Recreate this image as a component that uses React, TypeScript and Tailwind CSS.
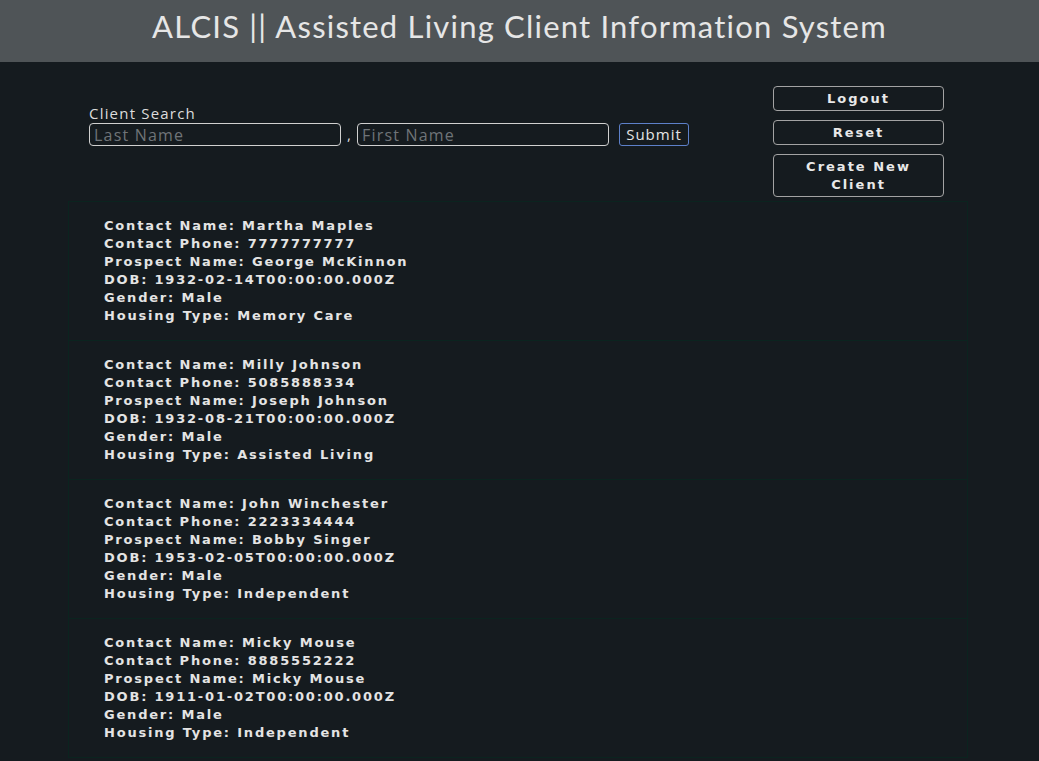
import React from "react";

const CLIENTS = [
  {
    contact: "Martha Maples",
    phone: "7777777777",
    prospect: "George McKinnon",
    dob: "1932-02-14T00:00:00.000Z",
    gender: "Male",
    housing: "Memory Care",
  },
  {
    contact: "Milly Johnson",
    phone: "5085888334",
    prospect: "Joseph Johnson",
    dob: "1932-08-21T00:00:00.000Z",
    gender: "Male",
    housing: "Assisted Living",
  },
  {
    contact: "John Winchester",
    phone: "2223334444",
    prospect: "Bobby Singer",
    dob: "1953-02-05T00:00:00.000Z",
    gender: "Male",
    housing: "Independent",
  },
  {
    contact: "Micky Mouse",
    phone: "8885552222",
    prospect: "Micky Mouse",
    dob: "1911-01-02T00:00:00.000Z",
    gender: "Male",
    housing: "Independent",
  },
];

const wide = { fontFamily: '"DejaVu Sans", "Open Sans", sans-serif' };

function SideButton({ children, tall }: { children: React.ReactNode; tall?: boolean }) {
  return (
    <button
      className={`w-[171px] rounded-[4px] border border-[#a3a3a3] px-3 text-[13px] font-semibold leading-[18px] tracking-[2px] text-[#e8e8e8] ${
        tall ? "h-[43px]" : "h-[25px]"
      }`}
      style={wide}
    >
      {children}
    </button>
  );
}

export default function App() {
  return (
    <div className="min-h-[761px] bg-[#151b1f]" style={{ fontFamily: '"Open Sans", sans-serif' }}>
      <header className="flex h-[62px] items-center justify-center bg-[#4f5457] pb-[10px]">
        <h1
          className="text-[31px] leading-none tracking-[1.2px] text-[#e6e6e6]"
          style={{ fontFamily: "Lato, sans-serif" }}
        >
          ALCIS || Assisted Living Client Information System
        </h1>
      </header>

      <div className="flex justify-between pl-[89px] pr-[95px] pt-[24px]">
        <div className="pt-[17px]">
          <div className="text-[15px] leading-[20px] tracking-[1.2px] text-[#dcdcdc]">Client Search</div>
          <div className="flex items-center">
            <input
              placeholder="Last Name"
              className="h-[23px] w-[252px] rounded-[4px] border border-[#d0d0d0] bg-transparent px-[4px] text-[16px] tracking-[1.2px] text-[#ddd] placeholder:text-[#6f7478]"
            />
            <span className="w-[16px] text-center text-[15px] text-[#ddd]">,</span>
            <input
              placeholder="First Name"
              className="h-[23px] w-[252px] rounded-[4px] border border-[#d0d0d0] bg-transparent px-[4px] text-[16px] tracking-[1.2px] text-[#ddd] placeholder:text-[#6f7478]"
            />
            <button className="ml-[10px] h-[23px] w-[70px] rounded-[3px] border border-[#5d80c9] text-[15px] leading-none tracking-[1px] text-[#e4e4e4]">
              Submit
            </button>
          </div>
        </div>
        <div className="flex flex-col gap-[9px]">
          <SideButton>Logout</SideButton>
          <SideButton>Reset</SideButton>
          <SideButton tall>
            Create New
            <br />
            Client
          </SideButton>
        </div>
      </div>

      <div className="ml-[68px] mt-[4px] w-[900px] border-x border-t border-[#0b241f]">
        {CLIENTS.map((c) => (
          <div
            key={c.contact}
            className="h-[139px] border-b border-[#0b241f] pl-[35px] pt-[15px] text-[13px] font-semibold leading-[18px] tracking-[1.8px] text-[#e4e4e4]"
            style={wide}
          >
            <div>Contact Name: {c.contact}</div>
            <div>Contact Phone: {c.phone}</div>
            <div>Prospect Name: {c.prospect}</div>
            <div>DOB: {c.dob}</div>
            <div>Gender: {c.gender}</div>
            <div>Housing Type: {c.housing}</div>
          </div>
        ))}
      </div>
    </div>
  );
}
